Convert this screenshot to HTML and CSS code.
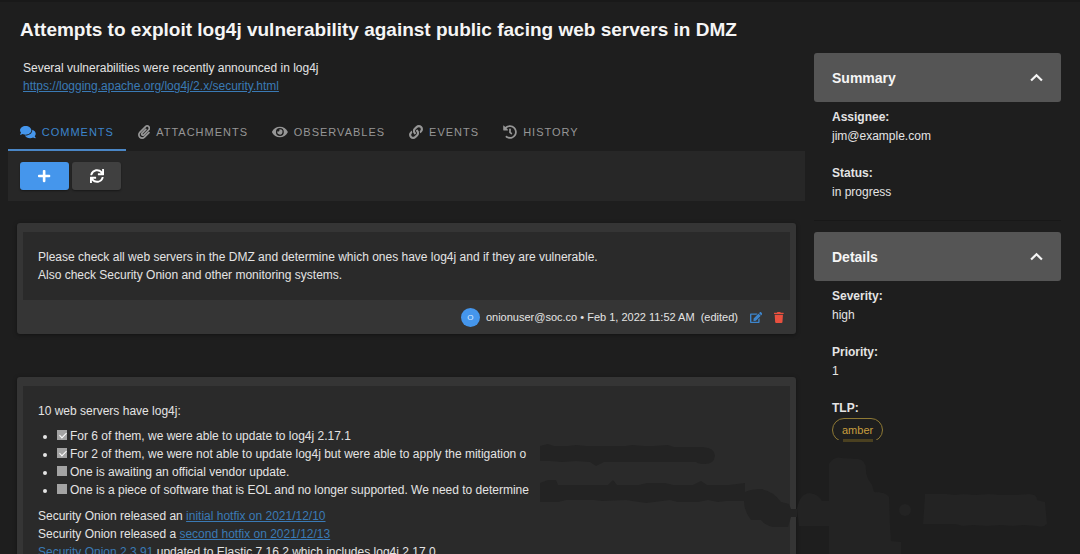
FILE: index.html
```html
<!DOCTYPE html>
<html lang="en">

<head>
    <meta charset="UTF-8">
    <meta name="viewport" content="width=device-width, initial-scale=1.0">
    <title>Case</title>
    <link rel="stylesheet" href="styles.css">
</head>

<body>
    <div class="page">
        <main class="case">
            <h1 class="case-title">Attempts to exploit log4j vulnerability against public facing web servers in DMZ</h1>
            <div class="case-description">
                <p>Several vulnerabilities were recently announced in log4j</p>
                <p><a href="#">https://logging.apache.org/log4j/2.x/security.html</a></p>
            </div>

            <nav class="tabs">
                <button type="button" class="tab active">
                    <svg class="icon" viewBox="0 0 576 512"><path d="M416 192c0-88.4-93.1-160-208-160S0 103.600 0 192c0 34.300 14.100 65.900 38 92-13.400 30.200-35.500 54.200-35.800 54.500-2.200 2.300-2.800 5.700-1.500 8.700S4.800 352 8 352c36.600 0 66.900-12.300 88.700-25 32.200 15.700 70.300 25 111.300 25 114.900 0 208-71.600 208-160zm122 220c23.900-26 38-57.700 38-92 0-66.900-53.500-124.200-129.300-148.100.9 6.600 1.300 13.300 1.300 20.100 0 105.900-107.700 192-240 192-10.800 0-21.300-.8-31.700-1.900C207.800 439.600 281.800 480 368 480c41 0 79.100-9.200 111.300-25 21.800 12.700 52.100 25 88.700 25 3.200 0 6.100-1.900 7.300-4.800 1.300-2.900.7-6.300-1.500-8.700-.3-.3-22.400-24.200-35.800-54.500z"/></svg>
                    Comments
                </button>
                <button type="button" class="tab">
                    <svg class="icon" viewBox="0 0 448 512"><path d="M43.246 466.142c-58.43-60.289-57.341-157.511 1.386-217.581L254.392 34c44.316-45.332 116.351-45.336 160.671 0 43.89 44.894 43.943 117.329 0 162.276L232.214 383.128c-29.855 30.537-78.633 30.111-107.982-.998-28.275-29.97-27.368-77.473 1.452-106.953l143.743-146.835c6.182-6.314 16.312-6.422 22.626-.241l22.861 22.379c6.315 6.182 6.422 16.312.241 22.626L171.427 319.927c-4.932 5.045-5.236 13.428-.648 18.292 4.372 4.634 11.245 4.711 15.688.165l182.849-186.851c19.613-20.062 19.613-52.725-.011-72.798-19.189-19.627-49.957-19.637-69.154 0L90.39 293.295c-34.763 35.56-35.299 93.12-1.191 128.313 34.01 35.093 88.985 35.137 123.058.286l172.06-175.999c6.177-6.319 16.307-6.433 22.626-.256l22.877 22.364c6.319 6.177 6.434 16.307.256 22.626l-172.06 175.998c-59.576 60.938-155.943 60.216-214.77-.485z"/></svg>
                    Attachments
                </button>
                <button type="button" class="tab">
                    <svg class="icon" viewBox="0 0 576 512"><path d="M572.52 241.4C518.29 135.59 410.93 64 288 64S57.68 135.64 3.48 241.41a32.35 32.35 0 0 0 0 29.19C57.71 376.41 165.07 448 288 448s230.32-71.64 284.52-177.41a32.35 32.35 0 0 0 0-29.19zM288 400a144 144 0 1 1 144-144 143.93 143.93 0 0 1-144 144zm0-240a95.31 95.31 0 0 0-25.31 3.79 47.85 47.85 0 0 1-66.9 66.9A95.78 95.78 0 1 0 288 160z"/></svg>
                    Observables
                </button>
                <button type="button" class="tab">
                    <svg class="icon" viewBox="0 0 512 512"><path d="M326.612 185.391c59.747 59.809 58.927 155.698.36 214.59-.11.12-.24.25-.36.37l-67.2 67.2c-59.27 59.27-155.699 59.262-214.96 0-59.27-59.26-59.27-155.7 0-214.96l37.106-37.106c9.84-9.84 26.786-3.3 27.294 10.606.648 17.722 3.826 35.527 9.69 52.721 1.986 5.822.567 12.262-3.783 16.612l-13.087 13.087c-28.026 28.026-28.905 73.66-1.155 101.96 28.024 28.579 74.086 28.749 102.325.51l67.2-67.19c28.191-28.191 28.073-73.757 0-101.83-3.701-3.694-7.429-6.564-10.341-8.569a16.037 16.037 0 0 1-6.947-12.606c-.396-10.567 3.348-21.456 11.698-29.806l21.054-21.055c5.521-5.521 14.182-6.199 20.584-1.731a152.482 152.482 0 0 1 20.522 17.197zM467.547 44.449c-59.261-59.262-155.69-59.27-214.96 0l-67.2 67.2c-.12.12-.25.25-.36.37-58.566 58.892-59.387 154.781.36 214.59a152.454 152.454 0 0 0 20.521 17.196c6.402 4.468 15.064 3.789 20.584-1.731l21.054-21.055c8.35-8.35 12.094-19.239 11.698-29.806a16.037 16.037 0 0 0-6.947-12.606c-2.912-2.005-6.64-4.875-10.341-8.569-28.073-28.073-28.191-73.639 0-101.83l67.2-67.19c28.239-28.239 74.3-28.069 102.325.51 27.75 28.3 26.872 73.934-1.155 101.96l-13.087 13.087c-4.35 4.35-5.769 10.79-3.783 16.612 5.864 17.194 9.042 34.999 9.69 52.721.509 13.906 17.454 20.446 27.294 10.606l37.106-37.106c59.271-59.259 59.271-155.699.001-214.959z"/></svg>
                    Events
                </button>
                <button type="button" class="tab">
                    <svg class="icon" viewBox="0 0 512 512"><path d="M504 255.531c.253 136.64-111.18 248.372-247.82 248.468-59.015.042-113.223-20.53-155.822-54.911-11.077-8.94-11.905-25.541-1.839-35.607l11.267-11.267c8.609-8.609 22.353-9.551 31.891-1.984C173.062 425.135 212.781 440 256 440c101.705 0 184-82.311 184-184 0-101.705-82.311-184-184-184-48.814 0-93.149 18.969-126.068 49.932l50.754 50.754c10.08 10.08 2.941 27.314-11.313 27.314H24c-8.837 0-16-7.163-16-16V38.627c0-14.254 17.234-21.393 27.314-11.314l49.372 49.372C129.209 34.136 189.552 8 256 8c136.81 0 247.747 110.78 248 247.531zm-180.912 78.784l9.823-12.63c8.138-10.463 6.253-25.542-4.21-33.679L288 256.349V152c0-13.255-10.745-24-24-24h-16c-13.255 0-24 10.745-24 24v135.651l65.409 50.874c10.463 8.137 25.541 6.253 33.679-4.21z"/></svg>
                    History
                </button>
            </nav>

            <div class="toolbar">
                <button type="button" class="btn btn-primary" aria-label="Add comment">
                    <svg class="icon" viewBox="0 0 448 512"><path d="M416 208H272V64c0-17.67-14.33-32-32-32h-32c-17.67 0-32 14.33-32 32v144H32c-17.67 0-32 14.33-32 32v32c0 17.67 14.33 32 32 32h144v144c0 17.67 14.33 32 32 32h32c17.67 0 32-14.33 32-32V304h144c17.67 0 32-14.33 32-32v-32c0-17.67-14.33-32-32-32z"/></svg>
                </button>
                <button type="button" class="btn" aria-label="Refresh">
                    <svg class="icon" viewBox="0 0 512 512"><path d="M440.65 12.57l4 82.77A247.16 247.16 0 0 0 255.83 8C134.73 8 33.91 94.92 12.29 209.82A12 12 0 0 0 24.09 224h49.05a12 12 0 0 0 11.67-9.26 175.91 175.91 0 0 1 317-56.94l-101.46-4.86a12 12 0 0 0-12.57 12v47.41a12 12 0 0 0 12 12H500a12 12 0 0 0 12-12V12a12 12 0 0 0-12-12h-47.37a12 12 0 0 0-11.98 12.57zM255.83 432a175.61 175.61 0 0 1-146-77.8l101.8 4.87a12 12 0 0 0 12.57-12v-47.4a12 12 0 0 0-12-12H12a12 12 0 0 0-12 12V500a12 12 0 0 0 12 12h47.35a12 12 0 0 0 12-12.6l-4.15-82.57A247.17 247.17 0 0 0 255.83 504c121.11 0 221.93-86.92 243.55-201.82a12 12 0 0 0-11.8-14.18h-49.05a12 12 0 0 0-11.67 9.26A175.86 175.86 0 0 1 255.83 432z"/></svg>
                </button>
            </div>

            <section class="comment-list">
                <article class="comment">
                    <div class="comment-body">
                        <p>Please check all web servers in the DMZ and determine which ones have log4j and if they are vulnerable.</p>
                        <p>Also check Security Onion and other monitoring systems.</p>
                    </div>
                    <div class="comment-footer">
                        <span class="avatar">O</span>
                        <span class="comment-info">onionuser@soc.co • Feb 1, 2022 11:52 AM &nbsp;(edited)</span>
                        <button type="button" class="btn-icon edit" aria-label="Edit">
                            <svg class="icon" viewBox="0 0 576 512"><path d="M402.6 83.2l90.2 90.2c3.8 3.8 3.8 10 0 13.8L274.400 405.600l-92.800 10.300c-12.400 1.400-22.900-9.100-21.500-21.500l10.300-92.800L388.800 83.200c3.800-3.800 10-3.800 13.800 0zm162-22.900l-48.800-48.800c-15.200-15.200-39.900-15.200-55.200 0l-35.400 35.400c-3.800 3.800-3.800 10 0 13.800l90.200 90.200c3.800 3.800 10 3.800 13.800 0l35.400-35.400c15.200-15.300 15.200-40 0-55.200zM384 346.200V448H64V128h229.800c3.200 0 6.200-1.300 8.500-3.500l40-40c7.600-7.600 2.200-20.500-8.500-20.500H48C21.500 64 0 85.500 0 112v352c0 26.500 21.500 48 48 48h352c26.500 0 48-21.500 48-48V306.200c0-10.700-12.900-16-20.500-8.500l-40 40c-2.200 2.300-3.500 5.300-3.500 8.500z"/></svg>
                        </button>
                        <button type="button" class="btn-icon delete" aria-label="Delete">
                            <svg class="icon" viewBox="0 0 448 512"><path d="M432 32H312l-9.400-18.700A24 24 0 0 0 281.100 0H166.800a23.720 23.720 0 0 0-21.400 13.300L136 32H16A16 16 0 0 0 0 48v32a16 16 0 0 0 16 16h416a16 16 0 0 0 16-16V48a16 16 0 0 0-16-16zM53.200 467a48 48 0 0 0 47.900 45h245.800a48 48 0 0 0 47.900-45L416 128H32z"/></svg>
                        </button>
                    </div>
                </article>

                <article class="comment">
                    <div class="comment-body">
                        <p>10 web servers have log4j:</p>
                        <ul class="tasks">
                            <li><label><input type="checkbox" checked disabled>For 6 of them, we were able to update to log4j 2.17.1</label></li>
                            <li><label><input type="checkbox" checked disabled>For 2 of them, we were not able to update log4j but were able to apply the mitigation o</label></li>
                            <li><label><input type="checkbox" disabled>One is awaiting an official vendor update.</label></li>
                            <li><label><input type="checkbox" disabled>One is a piece of software that is EOL and no longer supported. We need to determine</label></li>
                        </ul>
                        <p>Security Onion released an <a href="#">initial hotfix on 2021/12/10</a></p>
                        <p>Security Onion released a <a href="#">second hotfix on 2021/12/13</a></p>
                        <p><a href="#">Security Onion 2.3.91</a> updated to Elastic 7.16.2 which includes log4j 2.17.0</p>
                    </div>
                </article>
            </section>
        </main>

        <aside class="sidebar">
            <section class="panel">
                <button type="button" class="panel-header">
                    Summary
                    <svg class="chevron" viewBox="0 0 12 8"><path d="M1 7l5-5 5 5"/></svg>
                </button>
                <dl class="fields">
                    <dt>Assignee:</dt>
                    <dd>jim@example.com</dd>
                    <dt>Status:</dt>
                    <dd>in progress</dd>
                </dl>
            </section>
            <section class="panel">
                <button type="button" class="panel-header">
                    Details
                    <svg class="chevron" viewBox="0 0 12 8"><path d="M1 7l5-5 5 5"/></svg>
                </button>
                <dl class="fields">
                    <dt>Severity:</dt>
                    <dd>high</dd>
                    <dt>Priority:</dt>
                    <dd>1</dd>
                    <dt>TLP:</dt>
                    <dd><span class="chip">amber</span></dd>
                </dl>
            </section>
        </aside>

        <!-- dark patches over the bottom right corner -->
        <svg class="patches" viewBox="0 0 540 114" width="540" height="114" aria-hidden="true">
            <path class="patch-card" d="M0 6l8-2 6 2h14l8-1 10 1h40l6-1 12 1h10l14-1 6 2h29q12 1 12 9-1 8-10 8-7 0-9-2H64l-8 4-6-4-14-1-14 1-12-1H0z"/>
            <path class="patch-card" d="M0 43l8-3h8l2 5h50l5-5 4 5h22l8-2h18l8 2h20l8-4 6 4h22l16-2v9q6-3 16-3 12 2 20 13l8 2 2 5h6v8h-6l-3 10h-15q-8-2-12-7h-10q-7-9-7-19h-18l-8 1-10-2-10 2h-20l-8-2-24 3-20-3-24 1-8-1H26l-8 2H0z"/>
            <path class="patch-page" d="M257 69q3-16 13-16 8 1 12 8h7V24q5-8 13-6l16 1q9 1 8 14l2 6 4 6 2 7q12 0 15 5l1 28 1 16 10 1v12h-72V86h-30z"/>
            <circle class="patch-page" cx="365" cy="70" r="6"/>
            <path class="patch-page" d="M385 54h22l8 1 8-1 12 1 14-1 12 1h14l14-1q8 0 8 6l8 2 2 22q-4 4-10 2l-14-1-10 1-12-1-14 1-14-1-10 1-8-2h-32l1-14z"/>
            <rect class="patch-chip" x="303" y="-1" width="30" height="3"/>
        </svg>
    </div>
</body>

</html>
```
FILE: styles.css
```css
* {
    box-sizing: border-box;
    margin: 0;
    padding: 0;
}

body {
    background-color: #1e1e1e;
    color: #e4e4e4;
    font-family: 'Liberation Sans', Arial, sans-serif;
    font-size: 12px;
    line-height: 18px;
}

button {
    font-family: inherit;
    border: none;
    background: none;
    cursor: pointer;
}

a {
    color: #3a7ab5;
    text-decoration: underline;
}

.icon {
    display: block;
    height: 14px;
    fill: currentColor;
}

.page {
    position: relative;
    display: grid;
    grid-template-columns: 1fr 247px;
    gap: 9px;
    height: 100vh;
    padding: 0 19px 0 8px;
    border-top: 2px solid #191919;
    overflow: hidden;
}

/* Case */
.case-title {
    padding: 16px 12px 0;
    font-size: 19px;
    line-height: 24px;
    color: #f5f5f5;
    white-space: nowrap;
}

.case-description {
    padding: 17px 15px 0;
}

.tabs {
    display: flex;
    margin-top: 18px;
}

.tab {
    display: flex;
    align-items: center;
    gap: 6px;
    height: 38px;
    padding: 2px 12px 0;
    border-bottom: 2px solid transparent;
    color: #969696;
    font-size: 11px;
    letter-spacing: 1px;
    text-transform: uppercase;
}

.tab.active {
    color: #3d85cc;
    border-color: #4a86c5;
}

.tab.active .icon {
    color: #4596ec;
}

.toolbar {
    display: flex;
    gap: 3px;
    padding: 11px 12px;
    background-color: #272727;
}

.btn {
    display: flex;
    align-items: center;
    justify-content: center;
    width: 49px;
    height: 28px;
    border-radius: 3px;
    background-color: #404040;
    color: #fff;
    box-shadow: 0 1px 2px rgba(0, 0, 0, 0.4);
}

.btn-primary {
    background-color: #4596ec;
}

/* Comments */
.comment-list {
    display: grid;
    gap: 43px;
    padding: 22px 9px 0;
}

.comment {
    padding: 9px 6px 0;
    border-radius: 3px;
    background-color: #353535;
    box-shadow: 0 1px 4px rgba(0, 0, 0, 0.4);
}

.comment-body {
    padding: 16px 15px;
    background-color: #2a2a2a;
}

.comment-footer {
    display: flex;
    align-items: center;
    justify-content: flex-end;
    height: 34px;
    padding-right: 6px;
    font-size: 11px;
}

.avatar {
    width: 19px;
    height: 19px;
    margin-right: 6px;
    border-radius: 50%;
    background-color: #4596ec;
    color: #dcecff;
    font-size: 8px;
    line-height: 19px;
    text-align: center;
}

.btn-icon {
    margin-left: 12px;
}

.btn-icon .icon {
    height: 11px;
}

.edit {
    color: #3d85cc;
}

.delete {
    color: #e8503f;
}

.tasks {
    margin: 7px 0 8px;
    padding-left: 19px;
}

.tasks li {
    white-space: nowrap;
}

.tasks input {
    appearance: none;
    width: 10px;
    height: 10px;
    margin-right: 3px;
    background-color: #a3a3a3;
}

.tasks input:checked::after {
    content: '';
    display: block;
    width: 3px;
    height: 6px;
    margin: 1px 0 0 4px;
    border: solid #fff;
    border-width: 0 1px 1px 0;
    transform: rotate(45deg);
}

/* Sidebar */
.sidebar {
    padding-top: 51px;
}

.panel + .panel {
    margin-top: 19px;
    padding-top: 11px;
    border-top: 1px solid #181818;
}

.panel-header {
    display: flex;
    align-items: center;
    justify-content: space-between;
    width: 100%;
    height: 49px;
    padding: 0 18px;
    border-radius: 3px;
    background-color: #555;
    color: #f5f5f5;
    font-size: 14px;
    font-weight: bold;
}

.chevron {
    width: 13px;
    fill: none;
    stroke: currentColor;
    stroke-width: 2;
}

.fields {
    padding: 6px 18px 0;
}

.fields dt {
    line-height: 19px;
    font-weight: bold;
}

.fields dd + dt {
    margin-top: 19px;
}

.chip {
    display: inline-block;
    height: 24px;
    padding: 0 9px;
    border: 1px solid #8f7a35;
    border-radius: 12px;
    color: #c99f3f;
    font-size: 11px;
    line-height: 23px;
    clip-path: inset(0 0 2px);
}

.patches {
    position: absolute;
    right: 0;
    bottom: 0;
    overflow: visible;
}

.patch-card {
    fill: #232323;
}

.patch-page {
    fill: #232323;
}

.patch-chip {
    fill: #4a4020;
}
```
